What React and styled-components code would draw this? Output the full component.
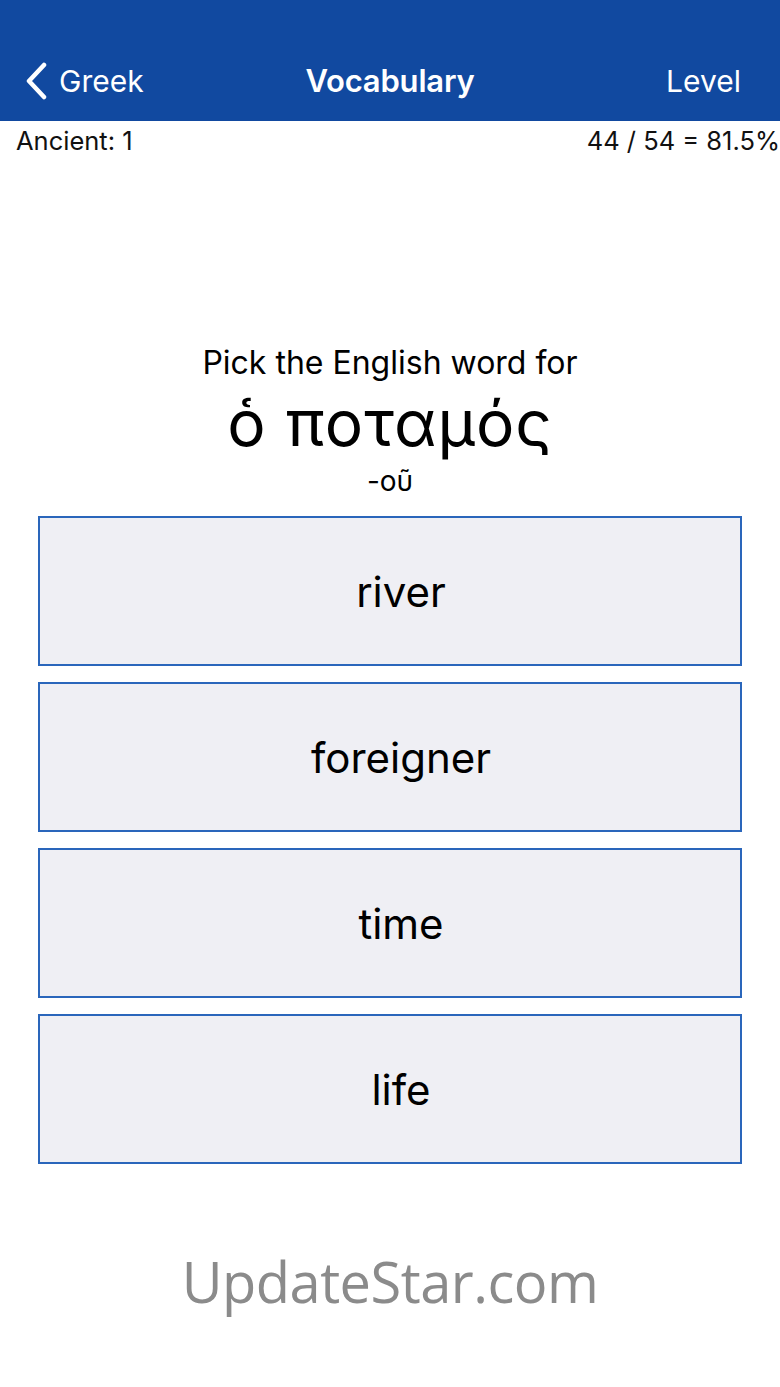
import React from "react";
import styled, { createGlobalStyle } from "styled-components";

const Global = createGlobalStyle`
  html, body { margin: 0; padding: 0; background: #fff; }
  body { font-family: Inter, "Noto Sans", sans-serif; -webkit-font-smoothing: antialiased; }
`;

const Page = styled.div`
  width: 780px;
  min-height: 1387px;
  display: flex;
  flex-direction: column;
  background: #fff;
`;

const NavBar = styled.header`
  height: 121px;
  box-sizing: border-box;
  padding-top: 40px;
  background: #1149a0;
  display: grid;
  grid-template-columns: 1fr auto 1fr;
  align-items: center;
  color: #fff;
`;

const BackButton = styled.div`
  display: flex;
  align-items: center;
  gap: 11px;
  padding-left: 24px;
  font-size: 30px;
  font-weight: 400;
`;

const Title = styled.div`
  font-size: 31px;
  font-weight: 600;
  letter-spacing: -0.2px;
`;

const NavRight = styled.div`
  justify-self: end;
  padding-right: 39px;
  font-size: 30px;
`;

const StatusRow = styled.div`
  height: 38px;
  display: flex;
  justify-content: space-between;
  align-items: center;
  padding: 0 0 0 16px;
  font-size: 25.5px;
  color: #111;
  white-space: nowrap;
`;

const Question = styled.section`
  display: flex;
  flex-direction: column;
  align-items: center;
  padding-top: 184px;
  color: #000;
`;

const Prompt = styled.div`
  font-size: 32px;
  line-height: 40px;
`;

const Word = styled.div`
  font-size: 64px;
  line-height: 80px;
  letter-spacing: 1px;
`;

const Genitive = styled.div`
  font-size: 28px;
  line-height: 36px;
`;

const Choices = styled.div`
  display: flex;
  flex-direction: column;
  gap: 16px;
  padding: 17px 38px 0;
`;

const Choice = styled.button`
  height: 150px;
  box-sizing: border-box;
  border: 2px solid #2a66bb;
  background: #efeff4;
  font-family: Inter, "Noto Sans", sans-serif;
  font-size: 42px;
  color: #000;
  display: flex;
  align-items: center;
  justify-content: center;
  padding: 0 0 0 22px;
`;

const Watermark = styled.div`
  margin-top: 79px;
  text-align: center;
  font-family: "Open Sans", "Noto Sans", sans-serif;
  font-size: 56px;
  color: #8b8b8b;
  letter-spacing: -0.5px;
`;

const choices = ["river", "foreigner", "time", "life"];

export default function App() {
  return (
    <Page>
      <Global />
      <NavBar>
        <BackButton>
          <svg width="24" height="38" viewBox="0 0 24 38">
            <path d="M20 3 L5 19 L20 35" fill="none" stroke="#fff" strokeWidth="4.5" strokeLinecap="round" strokeLinejoin="round" />
          </svg>
          Greek
        </BackButton>
        <Title>Vocabulary</Title>
        <NavRight>Level</NavRight>
      </NavBar>
      <StatusRow>
        <span>Ancient: 1</span>
        <span>44 / 54 = 81.5%</span>
      </StatusRow>
      <Question>
        <Prompt>Pick the English word for</Prompt>
        <Word>ὁ ποταμός</Word>
        <Genitive>-οῦ</Genitive>
      </Question>
      <Choices>
        {choices.map((c) => (
          <Choice key={c}>{c}</Choice>
        ))}
      </Choices>
      <Watermark>UpdateStar.com</Watermark>
    </Page>
  );
}
